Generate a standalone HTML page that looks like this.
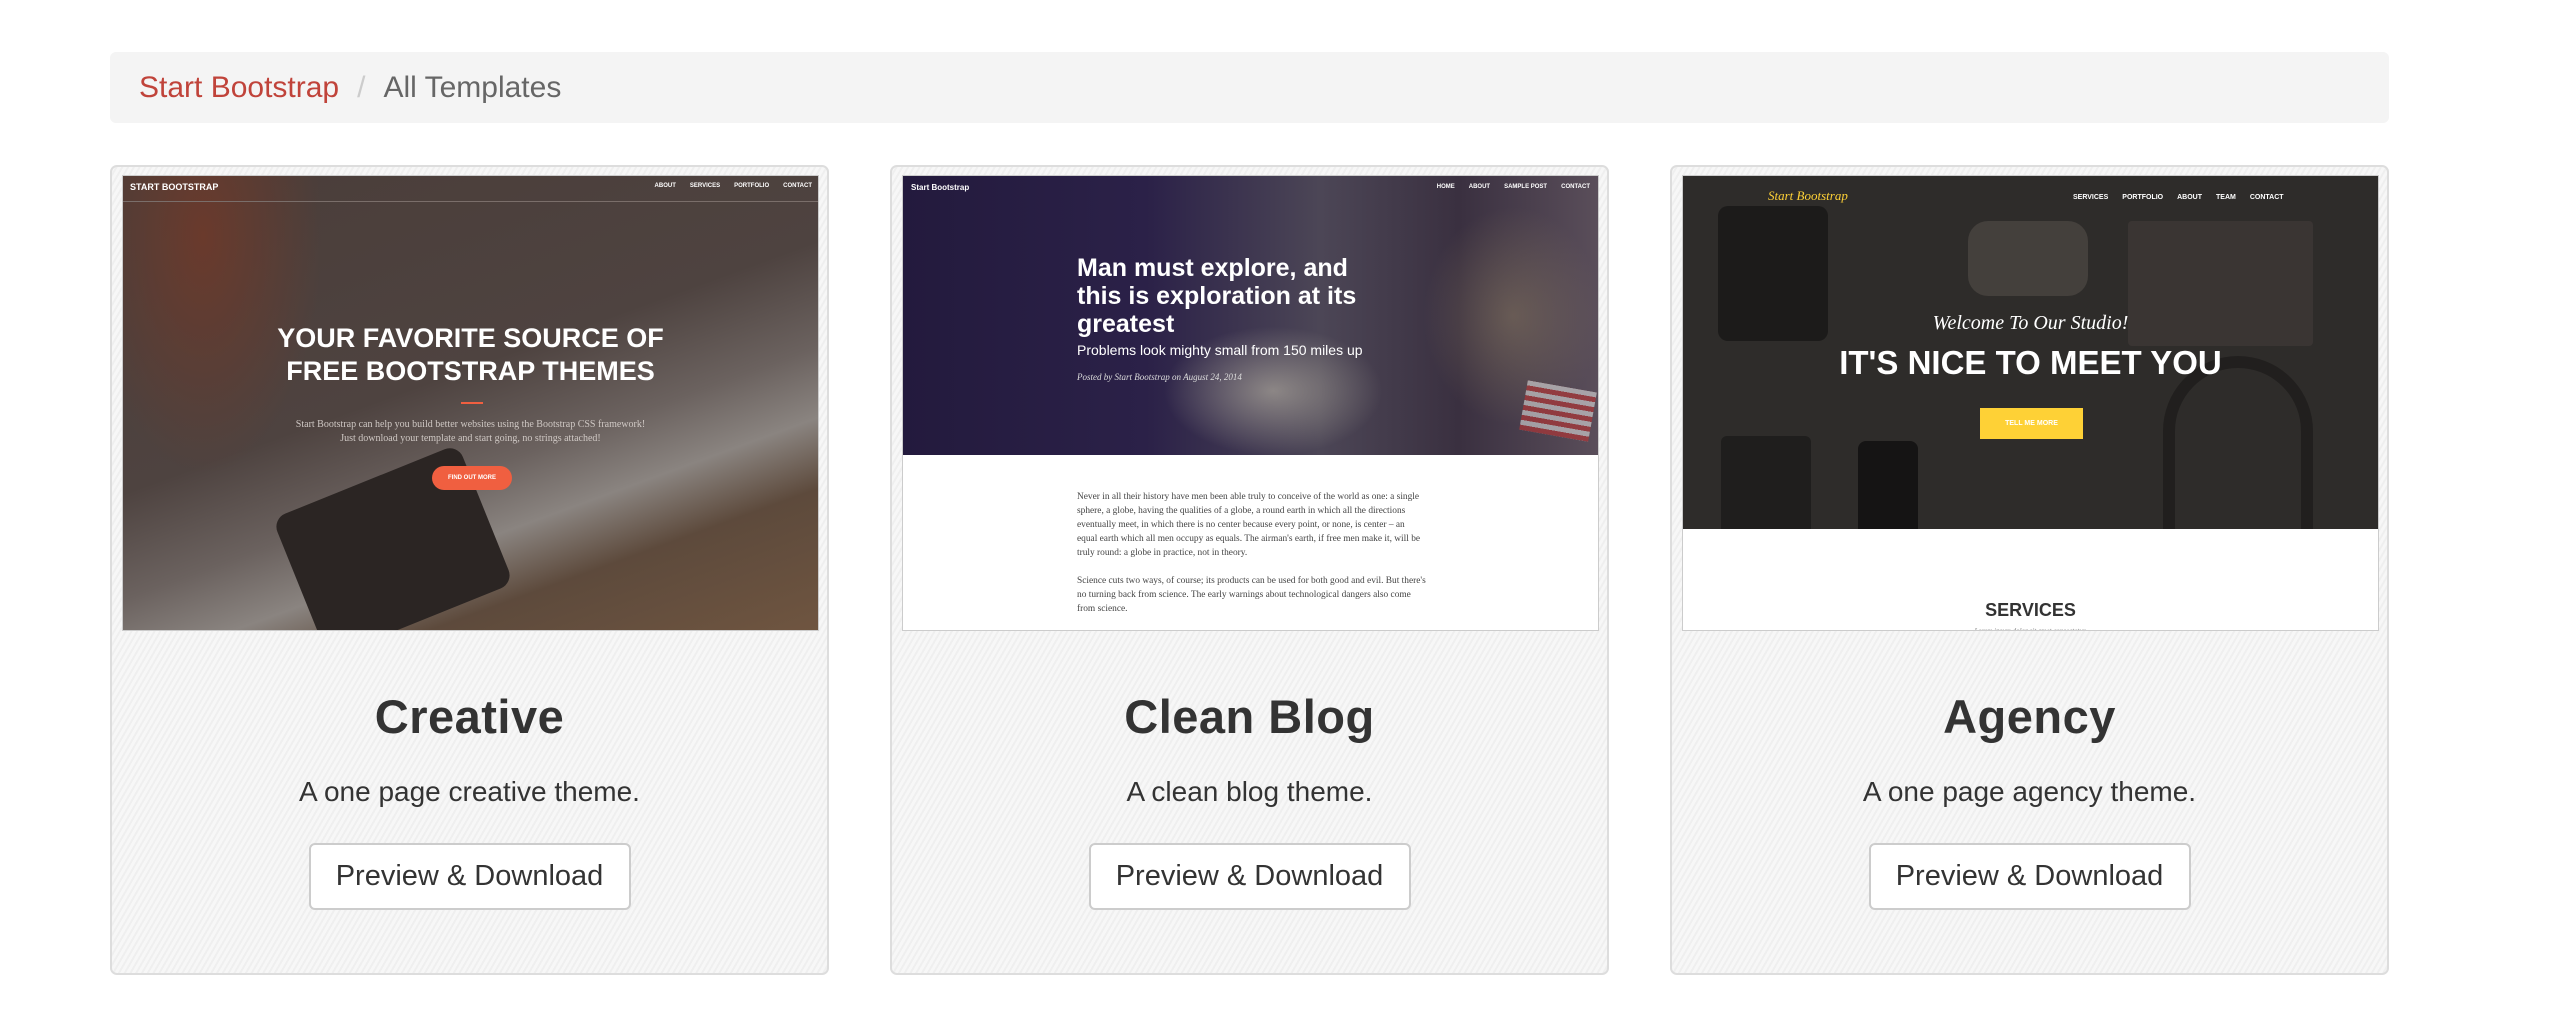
<!DOCTYPE html>
<html><head><meta charset="utf-8"><style>
*{margin:0;padding:0;box-sizing:border-box}
body{width:2564px;height:1036px;background:#fff;position:relative;overflow:hidden;font-family:"Liberation Sans",sans-serif}
.bc{position:absolute;left:110px;top:52px;width:2279px;height:71px;background:#f4f4f4;border-radius:6px;font-size:30px;line-height:71px;padding-left:29px;color:#666}
.bc a{color:#c0433a;text-decoration:none}
.bc .s{color:#ccc;padding:0 18px}
.card{position:absolute;top:165px;width:719px;height:810px;border:2px solid #ddd;border-radius:7px;background:#f5f5f5 repeating-linear-gradient(120deg,#f7f7f7 0 3px,#efefef 3px 5px)}
.img{position:absolute;left:10px;top:8px;width:697px;height:456px;border:1px solid #ccc;overflow:hidden}
.t{position:absolute;left:0;width:100%;text-align:center}
h2{position:absolute;top:522px;width:100%;text-align:center;font-size:47px;font-weight:bold;color:#333;letter-spacing:0.5px}
.d{position:absolute;top:609px;width:100%;text-align:center;font-size:28px;color:#333}
.btn{position:absolute;top:676px;left:50%;transform:translateX(-50%);width:322px;height:67px;border:2px solid #ccc;border-radius:6px;background:#fff;font-size:29px;line-height:63px;text-align:center;color:#333}
.ab{position:absolute;color:#fff;white-space:nowrap}
.nav span{margin-left:14px}
</style></head><body>
<div class="bc"><a>Start Bootstrap</a><span class="s">/</span>All Templates</div>

<div class="card" style="left:110px">
 <div class="img" style="background:linear-gradient(160deg,#4a3d39 0%,#4e4340 45%,#6b625f 60%,#8a8480 70%,#5d4a3c 80%,#6f5540 100%)">
  <div style="position:absolute;left:0;top:0;width:200px;height:300px;background:radial-gradient(ellipse at 40% 20%,#6a3a2c,transparent 70%)"></div>
  <div style="position:absolute;left:170px;top:300px;width:200px;height:150px;background:#2b2523;border-radius:14px;transform:rotate(-22deg)"></div>
  <div class="ab" style="left:7px;top:6px;font-size:9px;font-weight:bold">START BOOTSTRAP</div>
  <div class="ab nav" style="right:6px;top:7px;font-size:6px;font-weight:bold"><span>ABOUT</span><span>SERVICES</span><span>PORTFOLIO</span><span>CONTACT</span></div>
  <div style="position:absolute;left:0;top:25px;width:100%;height:1px;background:#7a6e6a"></div>
  <div class="t ab" style="top:146px;font-size:27px;font-weight:bold;line-height:33px">YOUR FAVORITE SOURCE OF<br>FREE BOOTSTRAP THEMES</div>
  <div style="position:absolute;left:338px;top:226px;width:22px;height:2px;background:#f05f40"></div>
  <div class="t" style="top:242px;font-size:10px;line-height:14px;color:#cfc8c4;font-family:'Liberation Serif',serif">Start Bootstrap can help you build better websites using the Bootstrap CSS framework!<br>Just download your template and start going, no strings attached!</div>
  <div style="position:absolute;left:309px;top:290px;width:80px;height:24px;border-radius:12px;background:#f05f40;color:#fff;font-size:6px;font-weight:bold;text-align:center;line-height:24px">FIND OUT MORE</div>
 </div>
 <h2>Creative</h2><div class="d">A one page creative theme.</div><div class="btn">Preview &amp; Download</div>
</div>

<div class="card" style="left:890px">
 <div class="img" style="background:#fff">
  <div style="position:absolute;left:0;top:0;width:100%;height:279px;overflow:hidden;background:linear-gradient(90deg,#231a3d 0%,#2b2148 35%,#4c4656 60%,#3a3040 80%,#5a4e5a 100%)">
   <div style="position:absolute;left:260px;top:150px;width:220px;height:130px;background:radial-gradient(ellipse,#bdb8a8,transparent 70%);opacity:.6"></div>
   <div style="position:absolute;left:520px;top:30px;width:180px;height:220px;background:radial-gradient(ellipse,#8a7a60,transparent 70%);opacity:.5"></div>
   <div style="position:absolute;left:620px;top:210px;width:70px;height:50px;background:repeating-linear-gradient(0deg,#b33 0 5px,#ddd 5px 10px);opacity:.6;transform:rotate(10deg)"></div>
  </div>
  <div class="ab" style="left:8px;top:7px;font-size:8px;font-weight:bold">Start Bootstrap</div>
  <div class="ab nav" style="right:8px;top:8px;font-size:6px;font-weight:bold"><span>HOME</span><span>ABOUT</span><span>SAMPLE POST</span><span>CONTACT</span></div>
  <div class="ab" style="left:174px;top:78px;font-size:25px;font-weight:bold;line-height:28px">Man must explore, and<br>this is exploration at its<br>greatest</div>
  <div class="ab" style="left:174px;top:166px;font-size:14px">Problems look mighty small from 150 miles up</div>
  <div style="position:absolute;left:174px;top:196px;font-size:9px;font-style:italic;color:#ddd;font-family:'Liberation Serif',serif">Posted by Start Bootstrap on August 24, 2014</div>
  <div style="position:absolute;left:174px;top:314px;width:350px;font-size:9.4px;line-height:14px;color:#444;font-family:'Liberation Serif',serif">Never in all their history have men been able truly to conceive of the world as one: a single sphere, a globe, having the qualities of a globe, a round earth in which all the directions eventually meet, in which there is no center because every point, or none, is center – an equal earth which all men occupy as equals. The airman's earth, if free men make it, will be truly round: a globe in practice, not in theory.<br><br>Science cuts two ways, of course; its products can be used for both good and evil. But there's no turning back from science. The early warnings about technological dangers also come from science.</div>
 </div>
 <h2>Clean Blog</h2><div class="d">A clean blog theme.</div><div class="btn">Preview &amp; Download</div>
</div>

<div class="card" style="left:1670px">
 <div class="img" style="background:#fff">
  <div style="position:absolute;left:0;top:0;width:100%;height:353px;overflow:hidden;background:#2e2c2a">
   <div style="position:absolute;left:35px;top:30px;width:110px;height:135px;background:#1c1b1a;border-radius:10px"></div>
   <div style="position:absolute;left:38px;top:260px;width:90px;height:180px;background:#1f1e1d;border-radius:6px"></div>
   <div style="position:absolute;left:175px;top:265px;width:60px;height:150px;background:#151414;border-radius:8px"></div>
   <div style="position:absolute;left:285px;top:45px;width:120px;height:75px;background:#44403c;border-radius:20px"></div>
   <div style="position:absolute;left:445px;top:45px;width:185px;height:125px;background:#3a3533;border-radius:4px"></div>
   <div style="position:absolute;left:480px;top:180px;width:150px;height:200px;border:12px solid #1e1d1c;border-radius:80px 80px 30px 30px;opacity:.8"></div>
  </div>
  <div style="position:absolute;left:85px;top:12px;font-size:13px;font-style:italic;color:#fed136;font-family:'Liberation Serif',serif">Start Bootstrap</div>
  <div class="ab nav" style="left:376px;top:18px;font-size:7px;font-weight:bold"><span>SERVICES</span><span>PORTFOLIO</span><span>ABOUT</span><span>TEAM</span><span>CONTACT</span></div>
  <div class="t ab" style="top:136px;font-size:20px;font-style:italic;font-family:'Liberation Serif',serif">Welcome To Our Studio!</div>
  <div class="t ab" style="top:168px;font-size:33px;font-weight:bold">IT'S NICE TO MEET YOU</div>
  <div style="position:absolute;left:297px;top:232px;width:103px;height:31px;background:#fed136;color:#fff;font-size:7px;font-weight:bold;text-align:center;line-height:31px">TELL ME MORE</div>
  <div class="t" style="top:424px;font-size:18px;font-weight:bold;color:#333">SERVICES</div>
  <div class="t" style="top:451px;font-size:7px;font-style:italic;color:#888;font-family:'Liberation Serif',serif">Lorem ipsum dolor sit amet consectetur.</div>
 </div>
 <h2>Agency</h2><div class="d">A one page agency theme.</div><div class="btn">Preview &amp; Download</div>
</div>
</body></html>
